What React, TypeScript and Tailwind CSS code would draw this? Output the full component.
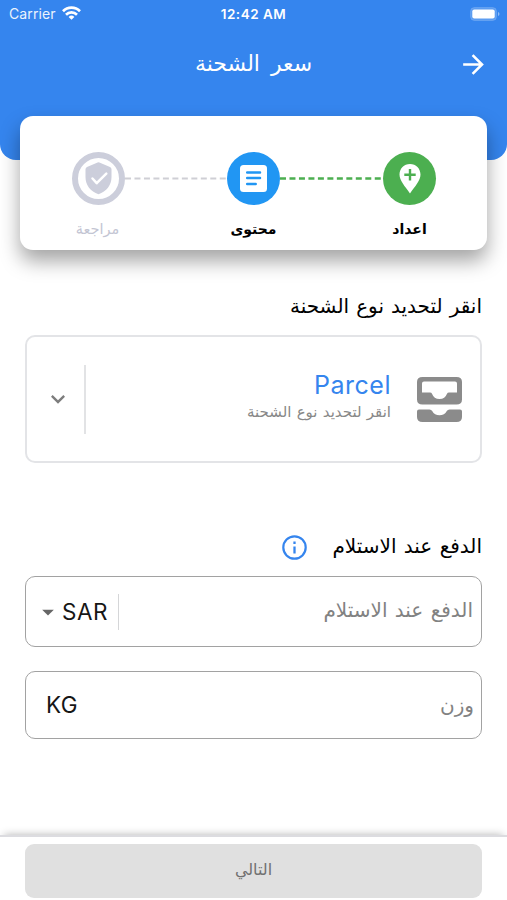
import { MdArrowForward, MdKeyboardArrowDown, MdArrowDropDown } from "react-icons/md";

const arabic = "font-['DejaVu_Sans',sans-serif] whitespace-nowrap";

function StatusBar() {
  return (
    <div dir="ltr" className="flex h-7 items-center px-[9px] text-white">
      <div className="flex flex-1 items-center gap-[6px]">
        <span className="-mt-[2px] text-[14px] tracking-[0.1px] opacity-90">Carrier</span>
        <svg width="19" height="14" viewBox="0 0 19 14" fill="none" stroke="white" strokeWidth="2.7" className="-mt-[2px]">
          <path d="M1 5.2a12 12 0 0 1 17 0" />
          <path d="M4 8.7a7.8 7.8 0 0 1 11 0" />
          <path d="M9.5 13.8 6.6 10.9a4.1 4.1 0 0 1 5.8 0Z" fill="white" stroke="none" />
        </svg>
      </div>
      <span className="text-[13.5px] font-semibold tracking-[0.5px]">12:42 AM</span>
      <div className="flex flex-1 justify-end">
        <svg width="30" height="14" viewBox="0 0 30 14" className="-mt-[1px] -mr-[2px]">
          <rect x="0.5" y="0.5" width="26" height="13" rx="4" fill="white" fillOpacity="0.2" stroke="white" strokeOpacity="0.15" />
          <rect x="2.3" y="2.5" width="22.4" height="9" rx="2" fill="white" />
          <path d="M28 5v4q1.5-.6 1.5-2T28 5Z" fill="white" fillOpacity="0.45" />
        </svg>
      </div>
    </div>
  );
}

function PinIcon() {
  return (
    <svg width="22" height="30" viewBox="0 0 22 30">
      <path d="M11 0C5 0 .5 4.6.5 10.6.5 16.5 6 22.5 11 29.5 16 22.5 21.5 16.5 21.5 10.6 21.5 4.6 17 0 11 0Z" fill="white" />
      <path d="M11 5v11.4M5.300 10.700h11.400" stroke="#4caf50" strokeWidth="2.4" />
    </svg>
  );
}

function DocumentIcon() {
  return (
    <svg width="27" height="27" viewBox="0 0 27 27">
      <rect width="27" height="27" rx="3.5" fill="white" />
      <path d="M7.2 7.4h12.800M7.200 13h12.800M7.200 18.900h8.500" stroke="#2196f3" strokeWidth="2.5" strokeLinecap="round" />
    </svg>
  );
}

function ShieldIcon() {
  return (
    <svg width="27" height="33" viewBox="0 0 27 33">
      <path d="M12.600.5q.9-.4 1.800 0L25 4.900q1.500.7 1.500 2.300v8.100c0 7.500-5 14.500-13 17-8-2.500-13-9.500-13-17V7.200Q.5 5.600 2 4.900Z" fill="#cccedb" />
      <path d="m7.500 16.500 4.200 4.700 9.600-9.600" fill="none" stroke="white" strokeWidth="2.5" strokeLinecap="round" strokeLinejoin="round" />
    </svg>
  );
}

function InboxIcon() {
  return (
    <svg width="45" height="45" viewBox="0 0 45 45" fill="#8b8b8b">
      <path fillRule="evenodd" d="M5.500 0h34Q45 0 45 5v17.500q0 5-5.500 5h-34q-5.500 0-5.500-5V5Q0 0 5.500 0ZM7 4.500q-2 0-2 2v9h8q1.500 0 2 1.200a8 8 0 0 0 15 0q.5-1.200 2-1.200h8v-9q0-2-2-2Z" />
      <path d="M2 32.500h10.500q1.800 0 2.700 1.500a8.300 8.300 0 0 0 14.600 0q.9-1.500 2.700-1.500H43q2 0 2 2V40q0 5-5.500 5h-34Q0 45 0 40v-5.500q0-2 2-2Z" />
    </svg>
  );
}

function InfoIcon() {
  return (
    <svg width="25" height="25" viewBox="0 0 25 25" fill="none" stroke="#3585ee">
      <circle cx="12.500" cy="12.500" r="11.200" strokeWidth="2.2" />
      <path d="M12.500 11.500v7" strokeWidth="2.3" />
      <path d="M12.500 6.500v2.500" strokeWidth="2.3" />
    </svg>
  );
}

export default function App() {
  return (
    <div dir="rtl" className="flex h-[900px] w-[507px] flex-col overflow-hidden bg-white font-[Inter,sans-serif]">
      <header className="h-[160px] shrink-0 rounded-b-[16px] bg-[#3585ee]">
        <StatusBar />
        <div className="grid h-[72px] grid-cols-[1fr_auto_1fr] items-center px-[18px] text-white">
          <MdArrowForward className="size-[31px]" />
          <h1 className={`${arabic} -mt-[2px] text-[22px] [word-spacing:4px]`}>سعر الشحنة</h1>
        </div>
      </header>

      <section className="relative mr-5 ml-5 -mt-[44px] h-[134px] shrink-0 rounded-[13px] bg-white px-[30px] pt-[36px] shadow-[0_11px_20px_rgba(0,0,0,0.36)]">
        <div className="flex items-center pr-[21px] pl-[21.5px]">
          <div className="flex size-[53px] shrink-0 items-center justify-center rounded-full bg-[#4caf50]">
            <PinIcon />
          </div>
          <svg className="h-[3px] min-w-0 flex-1" viewBox="0 0 103 3" preserveAspectRatio="none">
            <path d="M0 1.500h103" stroke="#4caf50" strokeWidth="2.5" strokeDasharray="6 3.5" />
          </svg>
          <div className="flex size-[53px] shrink-0 items-center justify-center rounded-full bg-[#2196f3]">
            <DocumentIcon />
          </div>
          <svg className="h-[3px] min-w-0 flex-1" viewBox="0 0 103 3" preserveAspectRatio="none">
            <path d="M0 1.500h103" stroke="#cfcfd5" strokeWidth="2" strokeDasharray="6 3.5" />
          </svg>
          <div className="flex size-[53px] shrink-0 items-center justify-center rounded-full border-[6px] border-[#cccedb]">
            <ShieldIcon />
          </div>
        </div>
        <div className={`${arabic} mt-[13px] flex justify-between text-[14px] leading-[22px] text-black`}>
          <span className="w-[95px] text-center font-bold">اعداد</span>
          <span className="w-[95px] text-center font-bold">محتوى</span>
          <span className="w-[95px] text-center text-[14.5px] text-[#c3c5d3]">مراجعة</span>
        </div>
      </section>

      <main className="flex flex-1 flex-col px-[25px] pt-[42px]">
        <h2 className={`${arabic} h-[28px] text-[20px] leading-[28px] [word-spacing:0.7px]`}>انقر لتحديد نوع الشحنة</h2>
        <button className="mt-[15px] flex h-[128px] shrink-0 items-center rounded-[10px] border-2 border-[#e3e4e7] pr-[18px]">
          <InboxIcon />
          <span className="mr-[26px] flex flex-1 flex-col items-start">
            <span className="-mt-[2px] text-[25px] leading-[29px] tracking-[0.5px] text-[#3585ee]">Parcel</span>
            <span className={`${arabic} text-[15px] leading-[25px] text-[#888] [word-spacing:0.5px]`}>انقر لتحديد نوع الشحنة</span>
          </span>
          <span className="h-[69px] w-[2px] bg-[#e2e3e5]" />
          <MdKeyboardArrowDown className="mr-[12px] ml-[17px] size-[28px] text-[#7d7d7d]" />
        </button>

        <div className="mt-[69px] flex h-[30px] items-center gap-[25px]">
          <h2 className={`${arabic} -mt-[3px] text-[20px] leading-[28px] [word-spacing:1px]`}>الدفع عند الاستلام</h2>
          <InfoIcon />
        </div>
        <div className="mt-[14px] flex h-[71px] shrink-0 items-center rounded-[10px] border-[1.5px] border-[#a2a2a2] pr-[8px] pl-[7px]">
          <span className={`${arabic} -mt-[3px] flex-1 text-[20px] text-[#828282] [word-spacing:1px]`}>الدفع عند الاستلام</span>
          <span className="h-[36px] w-px bg-[#d5d6d8]" />
          <span className="mr-[10px] pt-px text-[22.5px] tracking-[0.5px] text-[#161616]">SAR</span>
          <MdArrowDropDown className="ml-px size-[28px] text-[#666]" />
        </div>
        <div className="mt-[24px] flex h-[68px] shrink-0 items-center justify-between rounded-[10px] border-[1.5px] border-[#a2a2a2] pr-[7px] pl-[20px]">
          <span className={`${arabic} text-[20px] text-[#828282]`}>وزن</span>
          <span className="text-[22.5px] tracking-[0.5px] text-[#161616]">KG</span>
        </div>
      </main>

      <footer className="h-[65px] shrink-0 border-t-2 border-[#dcdce0] bg-white px-[25px] pt-[7px] shadow-[0_-4px_8px_-4px_rgba(0,0,0,0.3)]">
        <button className={`${arabic} flex h-[54px] w-full items-center justify-center rounded-[9px] bg-[#e0e0e0] pb-[3px] text-[16px] text-[#707070]`}>التالي</button>
      </footer>
    </div>
  );
}
